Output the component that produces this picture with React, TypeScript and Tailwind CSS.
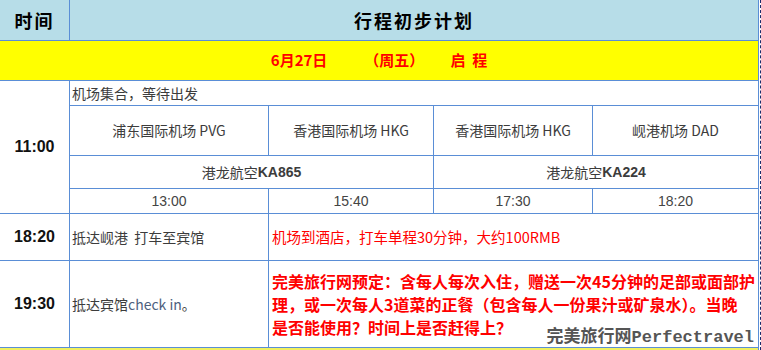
import React from 'react';

const cjk = '"Noto Sans CJK SC", "Noto Sans", sans-serif';
const sans = '"Liberation Sans", "Noto Sans CJK SC", sans-serif';

const airports = [
  { name: '浦东国际机场', code: 'PVG', w: 'w-[199px] border-r' },
  { name: '香港国际机场', code: 'HKG', w: 'w-[165px] border-r' },
  { name: '香港国际机场', code: 'HKG', w: 'w-[159px] border-r' },
  { name: '岘港机场', code: 'DAD', w: 'flex-1' },
];

const times = [
  { t: '13:00', w: 'w-[199px] border-r' },
  { t: '15:40', w: 'w-[165px] border-r' },
  { t: '17:30', w: 'w-[159px] border-r' },
  { t: '18:20', w: 'flex-1' },
];

function TimeCell({ label }: { label: string }) {
  return (
    <div
      className="w-[70px] shrink-0 border-r border-[#5a8ed6] flex items-center justify-center text-[16px] font-bold text-[#111]"
      style={{ fontFamily: sans }}
    >
      {label}
    </div>
  );
}

export default function App() {
  return (
    <div className="relative w-[761px] h-[350px] bg-white overflow-hidden" style={{ fontFamily: cjk }}>
      <div className="flex h-full">
        <div className="w-[759px] border-r border-[#5a8ed6] flex flex-col">
          {/* header */}
          <div className="h-[41px] flex bg-[#b7dde8] border-b border-[#5a8ed6]">
            <div className="w-[70px] border-r border-[#5a8ed6] flex items-center justify-center text-[18px] font-bold tracking-[2px] text-black">
              时间
            </div>
            <div className="flex-1 flex items-center justify-center text-[18px] font-bold tracking-[2px] text-black">
              行程初步计划
            </div>
          </div>

          {/* date */}
          <div className="h-[40px] bg-[#ffff00] border-b border-[#5a8ed6] flex items-center justify-center text-[15px] font-bold text-[#ff0000]">
            <span>6月27日</span>
            <span className="ml-[37px]">（周五）</span>
            <span className="ml-[26px]">启&nbsp;&nbsp;程</span>
          </div>

          {/* 11:00 */}
          <div className="h-[133px] flex border-b border-[#5a8ed6]">
            <TimeCell label="11:00" />
            <div className="flex-1 flex flex-col text-[14px] text-[#3c3c3c]">
              <div className="h-[25px] border-b border-[#5a8ed6] flex items-center pl-[2px]">机场集合，等待出发</div>
              <div className="h-[50px] border-b border-[#5a8ed6] flex">
                {airports.map((a, i) => (
                  <div key={i} className={`${a.w} border-[#5a8ed6] flex items-center justify-center`}>
                    {a.name} {a.code}
                  </div>
                ))}
              </div>
              <div className="h-[33px] border-b border-[#5a8ed6] flex">
                <div className="w-[364px] border-r border-[#5a8ed6] flex items-center justify-center">
                  港龙航空<b className="font-bold" style={{ fontFamily: sans }}>KA865</b>
                </div>
                <div className="flex-1 flex items-center justify-center">
                  港龙航空<b className="font-bold" style={{ fontFamily: sans }}>KA224</b>
                </div>
              </div>
              <div className="flex-1 flex" style={{ fontFamily: sans }}>
                {times.map((t, i) => (
                  <div key={i} className={`${t.w} border-[#5a8ed6] flex items-center justify-center text-[14px] text-[#444]`}>
                    {t.t}
                  </div>
                ))}
              </div>
            </div>
          </div>

          {/* 18:20 */}
          <div className="h-[47px] flex border-b border-[#5a8ed6]">
            <TimeCell label="18:20" />
            <div className="w-[199px] border-r border-[#5a8ed6] flex items-center pl-[2px] text-[14px] text-[#3c3c3c]">
              抵达岘港&nbsp;&nbsp;打车至宾馆
            </div>
            <div className="flex-1 flex items-center pl-[3px] text-[14.5px] text-[#ff0000]">
              机场到酒店，打车单程30分钟，大约100RMB
            </div>
          </div>

          {/* 19:30 */}
          <div className="h-[87px] flex border-b border-[#5a8ed6]">
            <TimeCell label="19:30" />
            <div className="w-[199px] border-r border-[#5a8ed6] flex items-center pl-[2px] text-[14px] text-[#3c3c3c]">
              抵达宾馆<span className="text-[#4d5f7e]">check in</span>。
            </div>
            <div className="flex-1 flex flex-col justify-center pl-[3px] text-[16px] leading-[23px] font-bold text-[#ff0000] whitespace-nowrap">
              <div>完美旅行网预定：含每人每次入住，赠送一次45分钟的足部或面部护</div>
              <div>理，或一次每人3道菜的正餐（包含每人一份果汁或矿泉水）。当晚</div>
              <div>是否能使用？时间上是否赶得上？</div>
            </div>
          </div>
          <div className="h-[2px] bg-[#f0f060]" />
        </div>
        <div className="w-[1px]" />
        <div className="w-[1px] border-r border-dashed border-[#1a2a6a]" />
      </div>

      <div className="absolute right-[7px] bottom-[4px] text-[17px] font-bold text-[#555] leading-none flex items-baseline">
        <span>完美旅行网</span>
        <span style={{ fontFamily: '"Liberation Mono", monospace' }}>Perfectravel</span>
      </div>
    </div>
  );
}
